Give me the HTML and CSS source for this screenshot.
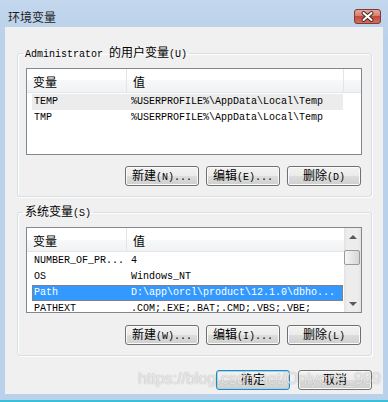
FILE: index.html
```html
<!DOCTYPE html>
<html lang="zh-CN">
<head>
    <meta charset="UTF-8">
    <title>环境变量</title>
    <link rel="stylesheet" href="styles.css">
</head>
<body>
    <div class="window">
        <div class="titlebar">
            <span class="title">环境变量</span>
            <svg class="close" width="27" height="15" viewBox="0 0 27 15">
                <defs>
                    <linearGradient id="red" x1="0" y1="0" x2="0" y2="1">
                        <stop offset="0" stop-color="#e9a99b"/>
                        <stop offset="0.45" stop-color="#d47f6f"/>
                        <stop offset="0.5" stop-color="#c4493b"/>
                        <stop offset="1" stop-color="#d2705f"/>
                    </linearGradient>
                </defs>
                <rect x="0.5" y="0.5" width="26" height="14" rx="2.5" fill="url(#red)" stroke="#7d3a36"/>
                <path d="M9.5 4 L17.5 11 M17.5 4 L9.5 11" stroke="#4a2a2a" stroke-width="4" stroke-linecap="round"/>
                <path d="M9.5 4 L17.5 11 M17.5 4 L9.5 11" stroke="#ffffff" stroke-width="2" stroke-linecap="round"/>
            </svg>
        </div>

        <div class="content">
            <fieldset class="group group-user">
                <legend>Administrator <span class="cn">的用户变量</span>(U)</legend>
                <div class="listview list-user">
                    <div class="lv-main">
                        <div class="lv-header">
                            <div class="h-name"><span class="cn">变量</span></div>
                            <div class="h-value"><span class="cn">值</span></div>
                            <div class="h-fill"></div>
                        </div>
                        <div class="lv-body">
                            <div class="row inactive"><span class="c-name">TEMP</span><span class="c-value">%USERPROFILE%\AppData\Local\Temp</span></div>
                            <div class="row"><span class="c-name">TMP</span><span class="c-value">%USERPROFILE%\AppData\Local\Temp</span></div>
                        </div>
                    </div>
                </div>
                <div class="btn-row">
                    <button class="btn"><span class="cn">新建</span>(N)...</button>
                    <button class="btn"><span class="cn">编辑</span>(E)...</button>
                    <button class="btn"><span class="cn">删除</span>(D)</button>
                </div>
            </fieldset>

            <fieldset class="group group-system">
                <legend><span class="cn">系统变量</span>(S)</legend>
                <div class="listview list-system">
                    <div class="lv-main">
                        <div class="lv-header">
                            <div class="h-name"><span class="cn">变量</span></div>
                            <div class="h-value"><span class="cn">值</span></div>
                        </div>
                        <div class="lv-body">
                            <div class="row"><span class="c-name">NUMBER_OF_PR...</span><span class="c-value">4</span></div>
                            <div class="row"><span class="c-name">OS</span><span class="c-value">Windows_NT</span></div>
                            <div class="row selected"><span class="c-name">Path</span><span class="c-value">D:\app\orcl\product\12.1.0\dbho...</span></div>
                            <div class="row"><span class="c-name">PATHEXT</span><span class="c-value">.COM;.EXE;.BAT;.CMD;.VBS;.VBE;</span></div>
                        </div>
                    </div>
                    <div class="scrollbar">
                        <div class="sb-arrow"><span class="tri-up"></span></div>
                        <div class="sb-track">
                            <div class="sb-thumb"></div>
                        </div>
                        <div class="sb-arrow"><span class="tri-down"></span></div>
                    </div>
                </div>
                <div class="btn-row">
                    <button class="btn"><span class="cn">新建</span>(W)...</button>
                    <button class="btn"><span class="cn">编辑</span>(I)...</button>
                    <button class="btn"><span class="cn">删除</span>(L)</button>
                </div>
            </fieldset>

            <div class="dialog-buttons">
                <button class="btn btn-default"><span class="cn">确定</span></button>
                <button class="btn"><span class="cn">取消</span></button>
            </div>
        </div>

        <div class="watermark">https://blog.csdn.net/Onlyone_989</div>
    </div>
</body>
</html>
```

FILE: styles.css
```css
* {
    box-sizing: border-box;
}

body {
    margin: 0;
    background-color: #b9d1ea;
    font-family: "Liberation Mono", "Noto Sans CJK SC", monospace;
    font-size: 10px;
    color: #000;
}

.cn {
    font-family: "Noto Sans CJK SC", sans-serif;
    font-size: 12px;
}

.window {
    position: relative;
    width: 388px;
    height: 402px;
    display: flex;
    flex-direction: column;
    background: linear-gradient(#c3d7ed, #b9d1ea 40px);
    border-bottom: 2px solid #38c0da;
}

/* 标题栏 */
.titlebar {
    height: 27px;
    flex-shrink: 0;
    display: flex;
    align-items: flex-start;
    justify-content: space-between;
    padding: 9px 7px 0 8px;
}

.title {
    font-family: "Noto Sans CJK SC", sans-serif;
    font-size: 12px;
    line-height: 15px;
    color: #1e1e1e;
}

.close {
    display: block;
}

/* 内容区 */
.content {
    flex: 1;
    margin: 0 5px 6px;
    background-color: #f0f0f0;
    display: flex;
    flex-direction: column;
}

.group {
    margin: 18px 11px 0 12px;
    padding: 6px 9px 10px 8px;
    border: 1px solid #d5dfe5;
    border-radius: 3px;
    box-shadow: inset 1px 1px 0 #fff, 1px 1px 0 #fff;
    min-width: 0;
}

.group-system {
    margin-top: 7px;
}

.group legend {
    margin-left: -3px;
    padding: 0 2px;
    line-height: 14px;
}

.group legend .cn {
    line-height: 14px;
}

/* 列表 */
.listview {
    height: 86px;
    display: flex;
    background-color: #fff;
    border: 1px solid #828790;
    overflow: hidden;
}

.list-user {
    height: 87px;
}

.lv-main {
    flex: 1;
    min-width: 0;
}

.lv-header {
    height: 24px;
    display: flex;
    border-bottom: 1px solid #e5e5e5;
    background: linear-gradient(#ffffff 0, #ffffff 50%, #f7f8f9 50%, #f1f2f4 100%);
    margin-bottom: 1px;
}

.lv-header > div {
    display: flex;
    align-items: center;
    padding: 3px 0 0 6px;
    line-height: 14px;
}

.h-name {
    width: 100px;
    border-right: 1px solid #e3e5e8;
}

.h-value {
    width: 217px;
    border-right: 1px solid #e3e5e8;
}

.list-system .h-value {
    border-right: none;
}

.h-fill {
    flex: 1;
}

.row {
    height: 16px;
    line-height: 16px;
    width: 311px;
    margin-left: 5px;
    padding-left: 2px;
    display: flex;
    white-space: nowrap;
}

.row.inactive {
    background-color: #ececec;
}

.row.selected {
    background-color: #3399ff;
    color: #fff;
    outline: 1px dotted #cc6a1e;
    outline-offset: -1px;
}

.c-name {
    width: 97px;
    flex-shrink: 0;
}

.c-value {
    flex: 1;
    overflow: hidden;
}

/* 滚动条 */
.scrollbar {
    width: 17px;
    display: flex;
    flex-direction: column;
    background: linear-gradient(90deg, #e2e2e2, #ededed 3px, #ededed 14px, #e2e2e2);
}

.sb-arrow {
    height: 17px;
    display: flex;
    align-items: center;
    justify-content: center;
}

.tri-up,
.tri-down {
    width: 0;
    height: 0;
    border-left: 4px solid transparent;
    border-right: 4px solid transparent;
}

.tri-up {
    border-bottom: 4px solid #5a5a5a;
}

.tri-down {
    border-top: 4px solid #5a5a5a;
}

.sb-track {
    flex: 1;
    padding-top: 5px;
}

.sb-thumb {
    height: 15px;
    margin: 0 1px 0 0;
    border: 1px solid #9a9a9a;
    border-radius: 2px;
    background: linear-gradient(90deg, #f5f5f5, #e6e6e6 50%, #d6d6d6);
}

/* 按钮 */
.btn-row {
    margin-top: 11px;
    display: flex;
    justify-content: flex-end;
    gap: 7px;
    padding-right: 1px;
}

.group-system .btn-row {
    margin-top: 12px;
}

.btn {
    width: 74px;
    height: 20px;
    padding: 0;
    border: 1px solid #707070;
    border-radius: 3px;
    background: linear-gradient(#f2f2f2 0%, #ebebeb 50%, #dddddd 50%, #cfcfcf 100%);
    box-shadow: inset 0 0 0 1px #fbfbfb;
    font-family: "Liberation Mono", "Noto Sans CJK SC", monospace;
    font-size: 10px;
    line-height: 16px;
    color: #000;
}

.btn .cn {
    line-height: 16px;
}

.btn-default {
    border-color: #3c7fb1;
    box-shadow: inset 0 0 0 1px #8fdcf9;
}

.dialog-buttons {
    margin: 14px 11px 0 0;
    display: flex;
    justify-content: flex-end;
    gap: 8px;
}

/* 水印 */
.watermark {
    position: absolute;
    left: 138px;
    top: 370px;
    font-family: "Liberation Sans", sans-serif;
    font-size: 16px;
    color: rgba(255, 255, 255, 0.75);
    text-shadow: 0 0 1px rgba(90, 90, 90, 0.6);
    white-space: nowrap;
}
```
